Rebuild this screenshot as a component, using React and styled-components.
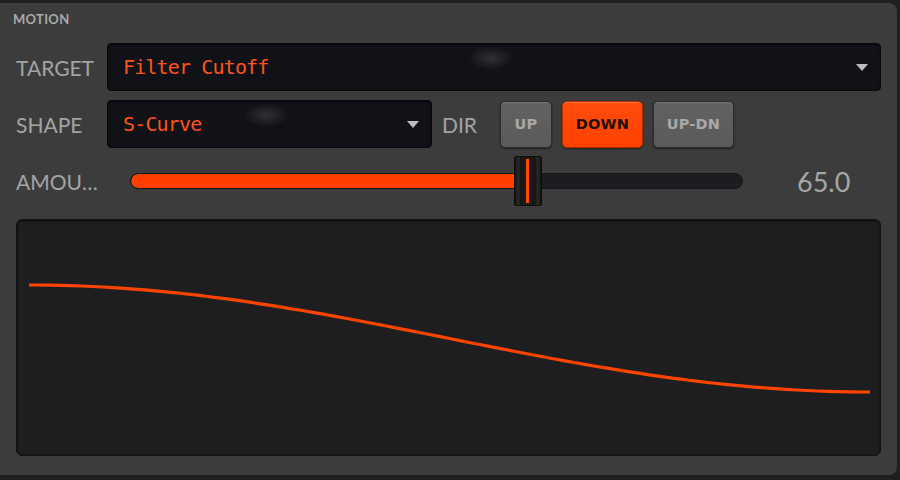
import React from 'react'
import styled, { createGlobalStyle } from 'styled-components'

const GlobalStyle = createGlobalStyle`
  html, body {
    margin: 0;
    padding: 0;
    background: #1f1f1f;
    overflow: hidden;
  }
`

const Panel = styled.div`
  box-sizing: border-box;
  margin: 3px 3px 0 -10px;
  height: 472px;
  padding: 8px 16px 0 26px;
  background: #3c3c3c;
  border-radius: 8px;
  display: flex;
  flex-direction: column;
  font-family: Lato, 'Liberation Sans', sans-serif;
`

const Title = styled.div`
  margin-left: -3px;
  height: 16px;
  line-height: 16px;
  font-size: 13px;
  font-weight: 700;
  color: #a9a9a9;
  letter-spacing: 0.3px;
`

const Row = styled.div`
  display: flex;
  align-items: center;
  height: ${p => p.h || 48}px;
  margin-top: ${p => p.mt || 0}px;
`

const Label = styled.div`
  width: ${p => p.w || 91}px;
  flex: none;
  font-size: 21px;
  color: #a4a4a4;
  white-space: nowrap;
  overflow: hidden;
  text-overflow: ellipsis;
`

const Select = styled.div`
  position: relative;
  box-sizing: border-box;
  height: 48px;
  width: ${p => (p.w ? p.w + 'px' : 'auto')};
  flex: ${p => (p.w ? 'none' : '1')};
  background: #101218;
  border: 1px solid #08090b;
  border-radius: 4px;
  box-shadow: inset 0 1px 2px rgba(0, 0, 0, 0.6);
  display: flex;
  align-items: center;
  padding: 0 12px 0 15px;
  overflow: hidden;

  &::before {
    content: '';
    position: absolute;
    left: ${p => p.glow}px;
    top: 2px;
    width: 46px;
    height: 24px;
    border-radius: 50%;
    background: radial-gradient(ellipse at center, rgba(120, 120, 120, 0.3), rgba(120, 120, 120, 0) 70%);
  }
`

const SelectText = styled.span`
  flex: 1;
  font-family: 'DejaVu Sans Mono', 'Liberation Mono', monospace;
  font-size: 20px;
  color: #ff5418;
  letter-spacing: -0.85px;
`

const Caret = styled.span`
  width: 0;
  height: 0;
  border-left: 6px solid transparent;
  border-right: 6px solid transparent;
  border-top: 7px solid #bdbdbd;
`

const DirLabel = styled.div`
  margin-left: 10px;
  width: 58px;
  font-size: 21px;
  color: #a4a4a4;
`

const Buttons = styled.div`
  display: flex;
  gap: 10px;
`

const DirButton = styled.button`
  box-sizing: border-box;
  width: ${p => p.w}px;
  height: 47px;
  padding: 0;
  border-radius: 5px;
  border: 1px solid ${p => (p.active ? '#b22e00' : '#2c2c2c')};
  background: ${p =>
    p.active
      ? 'linear-gradient(#ff4c0c, #ff4000)'
      : 'linear-gradient(#626262, #5a5a5a)'};
  box-shadow: inset 0 1px 0 ${p => (p.active ? 'rgba(255,140,90,0.6)' : 'rgba(255,255,255,0.12)')},
    0 1px 2px rgba(0, 0, 0, 0.5);
  color: ${p => (p.active ? '#1c1008' : '#a9a9a9')};
  font-family: 'DejaVu Sans', Roboto, sans-serif;
  font-weight: 700;
  font-size: 14.5px;
  letter-spacing: 0.2px;
`

const SliderWrap = styled.div`
  position: relative;
  width: 613px;
  height: 50px;
  margin-left: 28px;
  flex: none;
  display: flex;
  align-items: center;
`

const Track = styled.div`
  position: relative;
  width: 100%;
  height: 16px;
  box-sizing: border-box;
  border-radius: 8px;
  background: #1c1d21;
  border: 1px solid #141518;
  overflow: hidden;
`

const Fill = styled.div`
  height: 100%;
  background: #ff3f00;
  border-radius: 8px 0 0 8px;
`

const Thumb = styled.div`
  position: absolute;
  top: 0;
  width: 28px;
  height: 50px;
  box-sizing: border-box;
  border: 1px solid #0c0c0c;
  border-radius: 2px;
  background: linear-gradient(
    90deg,
    #111 0%,
    #2b2b2b 12%,
    #151515 22%,
    #1e1e1e 50%,
    #151515 78%,
    #2b2b2b 88%,
    #111 100%
  );

  &::after {
    content: '';
    position: absolute;
    left: 11px;
    top: 2px;
    bottom: 2px;
    width: 3px;
    background: #ff4a00;
  }
`

const Value = styled.div`
  margin-left: 54px;
  font-size: 27px;
  color: #a6a6a6;
`

const Graph = styled.div`
  margin-top: 13px;
  height: 237px;
  box-sizing: border-box;
  background: #1e1e20;
  border: 1px solid #121213;
  border-radius: 6px;
  box-shadow: inset 0 1px 3px rgba(0, 0, 0, 0.6);
  overflow: hidden;
`

function curvePath() {
  const x0 = 12, x1 = 853, y0 = 65, y1 = 172
  const pts = []
  for (let i = 0; i <= 80; i++) {
    const t = i / 80
    const x = x0 + (x1 - x0) * t
    const y = y0 + ((y1 - y0) * (1 - Math.cos(Math.PI * t))) / 2
    pts.push((i ? 'L' : 'M') + x.toFixed(1) + ' ' + y.toFixed(1))
  }
  return pts.join(' ')
}

export default function App() {
  const amount = 65
  return (
    <>
      <GlobalStyle />
      <Panel>
        <Title>MOTION</Title>
        <Row mt={16}>
          <Label>TARGET</Label>
          <Select glow={360}>
            <SelectText>Filter Cutoff</SelectText>
            <Caret />
          </Select>
        </Row>
        <Row mt={9}>
          <Label>SHAPE</Label>
          <Select w={325} glow={135}>
            <SelectText>S-Curve</SelectText>
            <Caret />
          </Select>
          <DirLabel>DIR</DirLabel>
          <Buttons>
            <DirButton w={52}>UP</DirButton>
            <DirButton w={81} active>DOWN</DirButton>
            <DirButton w={81}>UP-DN</DirButton>
          </Buttons>
        </Row>
        <Row mt={8} h={50}>
          <Label w={86}>AMOUNT</Label>
          <SliderWrap>
            <Track>
              <Fill style={{ width: amount + '%' }} />
            </Track>
            <Thumb style={{ left: `calc(${amount}% - 14px)` }} />
          </SliderWrap>
          <Value>{amount.toFixed(1)}</Value>
        </Row>
        <Graph>
          <svg width="865" height="237" viewBox="0 0 865 237">
            <path d={curvePath()} fill="none" stroke="#ff4400" strokeWidth="3.2" />
          </svg>
        </Graph>
      </Panel>
    </>
  )
}
